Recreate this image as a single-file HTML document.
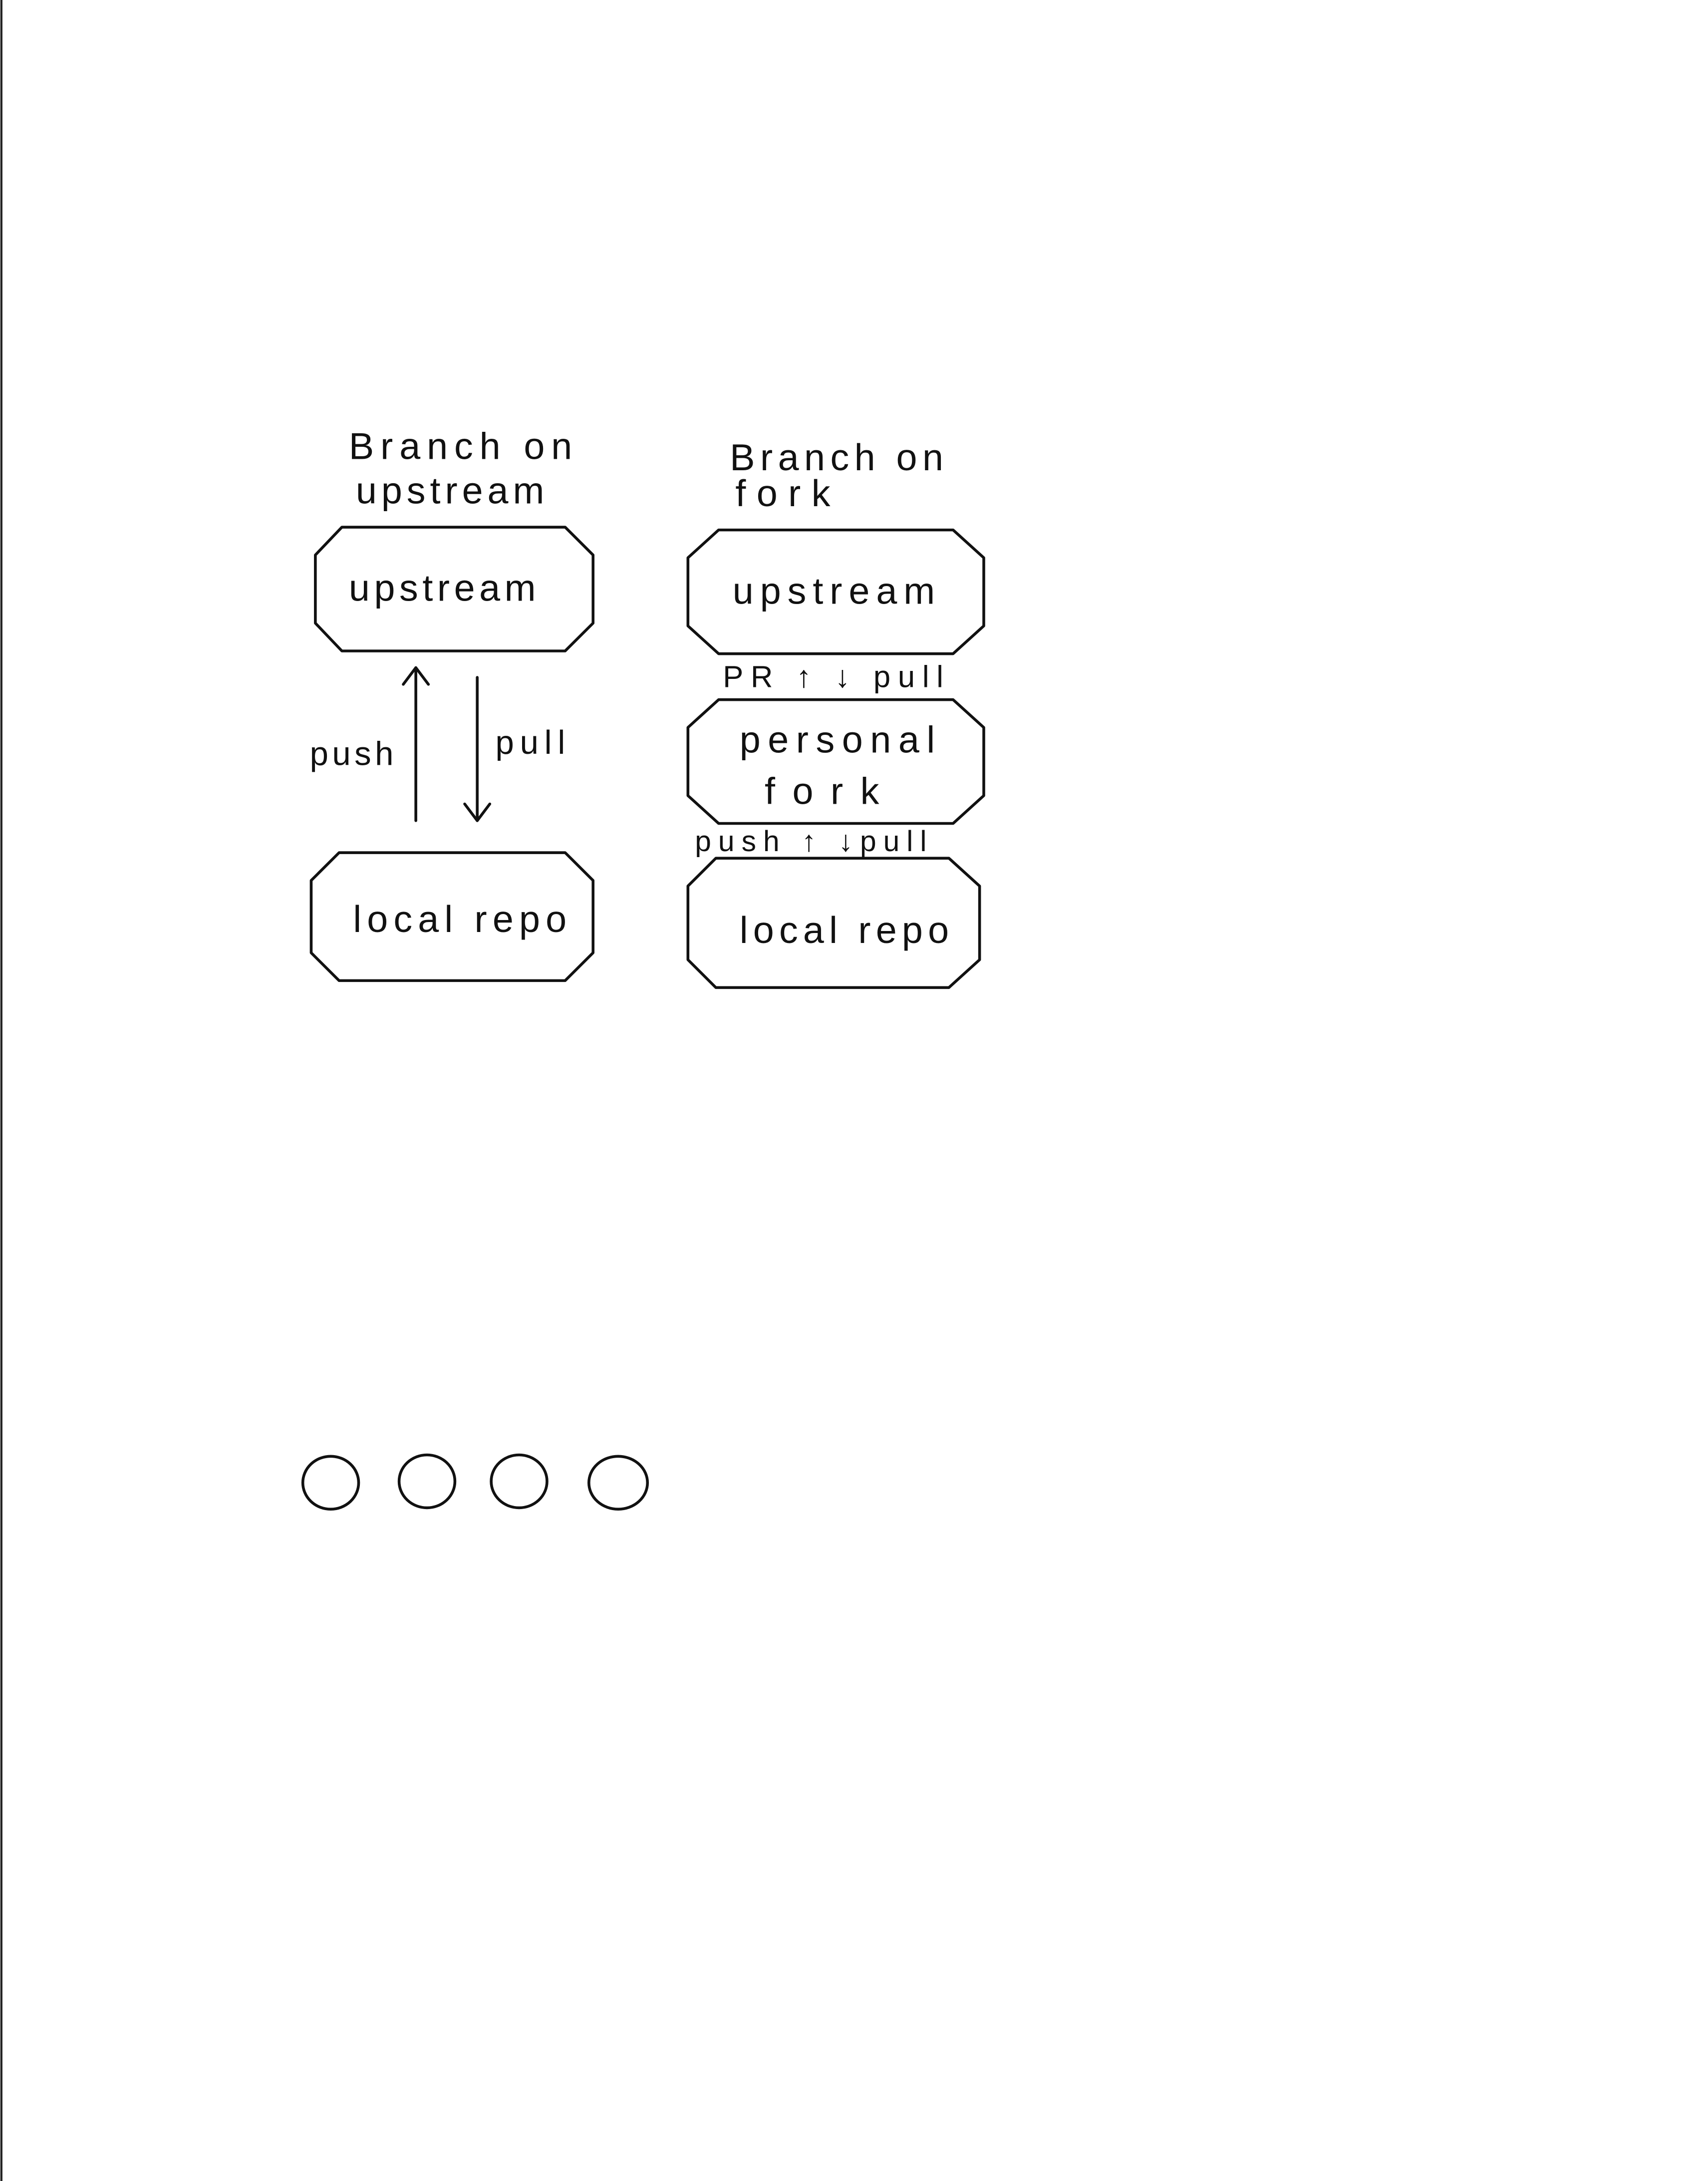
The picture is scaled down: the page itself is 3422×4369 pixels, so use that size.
<!DOCTYPE html>
<html><head><meta charset="utf-8"><style>
html,body{margin:0;padding:0;background:#fff;}
svg{display:block;}
text{font-family:"Liberation Sans",sans-serif;fill:#111;}
</style></head><body>
<svg width="3422" height="4369" viewBox="0 0 1224 1568" preserveAspectRatio="none" xmlns="http://www.w3.org/2000/svg">
<rect width="1224" height="1568" fill="#fff"/>
<line x1="1" y1="0" x2="1" y2="1568" stroke="#222" stroke-width="1.5"/>
<g fill="none" stroke="#111" stroke-width="2" stroke-linejoin="round" stroke-linecap="round">
<polygon points="245,379 405,379 425,399 425,448 405,468 245,468 226,448 226,399"/>
<polygon points="243,613 405,613 425,633 425,685 405,705 243,705 223,685 223,633"/>
<line x1="298" y1="590" x2="298" y2="480"/>
<polyline points="289,492 298,480 307,492"/>
<line x1="342" y1="487" x2="342" y2="590"/>
<polyline points="333,578 342,590 351,578"/>
<polygon points="515,381 683,381 705,401 705,450 683,470 515,470 493,450 493,401"/>
<polygon points="515,503 683,503 705,523 705,572 683,592 515,592 493,572 493,523"/>
<polygon points="513,617 680,617 702,637 702,690 680,710 513,710 493,690 493,637"/>
<ellipse cx="237" cy="1066" rx="20" ry="19"/>
<ellipse cx="306" cy="1065" rx="20" ry="19"/>
<ellipse cx="372" cy="1065" rx="20" ry="19"/>
<ellipse cx="443" cy="1066" rx="21" ry="19"/>
</g>
<g font-size="27" lengthAdjust="spacing">
<text x="250" y="330" textLength="160">Branch on</text>
<text x="255" y="362" textLength="135">upstream</text>
<text x="250" y="432" textLength="134">upstream</text>
<text x="253" y="670" textLength="153">local repo</text>
<text x="222" y="550" font-size="24" textLength="60">push</text>
<text x="355" y="542" font-size="24" textLength="50">pull</text>
<text x="523" y="338" textLength="153">Branch on</text>
<text x="527" y="364" textLength="68">fork</text>
<text x="525" y="434" textLength="145">upstream</text>
<text x="530" y="541" textLength="140">personal</text>
<text x="548" y="578" textLength="82">fork</text>
<text x="530" y="678" textLength="150">local repo</text>
<text x="518" y="494" font-size="22" textLength="158">PR ↑   ↓ pull</text>
<text x="498" y="612" font-size="21" textLength="166">push ↑    ↓pull</text>
</g>
</svg>
</body></html>
